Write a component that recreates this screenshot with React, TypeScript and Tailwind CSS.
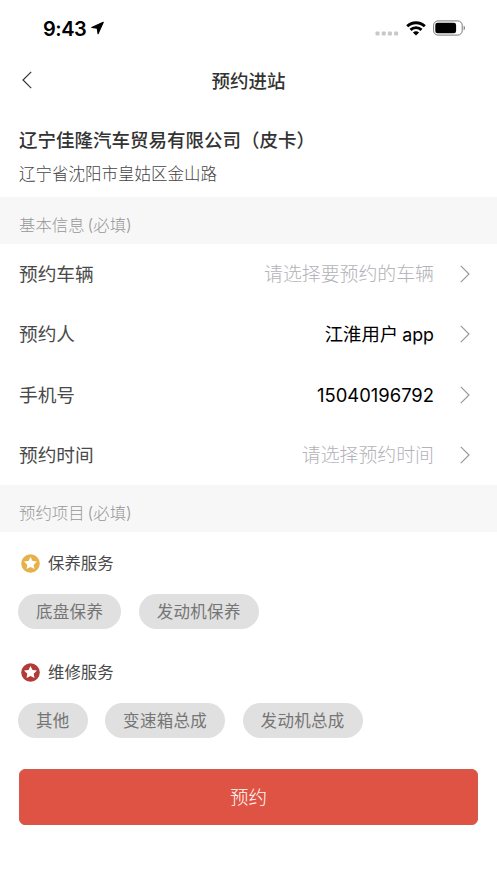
import { clsx } from "clsx";

const fields = [
  { label: "预约车辆", placeholder: "请选择要预约的车辆" },
  { label: "预约人", value: "江淮用户", suffix: "app" },
  { label: "手机号", value: "15040196792" },
  { label: "预约时间", placeholder: "请选择预约时间" },
];

const services = [
  { name: "保养服务", color: "text-[#e6b04a]", items: ["底盘保养", "发动机保养"] },
  { name: "维修服务", color: "text-[#b23a38]", items: ["其他", "变速箱总成", "发动机总成"] },
];

const StatusBar = () => (
  <div className="flex h-14 items-center justify-between pl-[43px] pr-[31px]">
    <div className="flex items-center gap-[5px]">
      <span className="pt-px text-[20px] leading-6 font-semibold tracking-[-0.5px] text-black">9:43</span>
      <svg width="13" height="14" viewBox="0 0 14 14">
        <path d="M13.2 0.8 L7.6 13.2 L6.7 7.3 L0.8 6.4 Z" fill="#000" stroke="#000" strokeWidth="1.2" strokeLinejoin="round" />
      </svg>
    </div>
    <div className="flex items-center">
      <svg className="mt-[10px] mr-[7px]" width="24" height="5" viewBox="0 0 24 5" fill="#c8c8c8">
        <rect x="0.5" y="0.5" width="4" height="4" rx="1" />
        <rect x="6.7" y="0.5" width="4" height="4" rx="1" />
        <rect x="12.9" y="0.5" width="4" height="4" rx="1" />
        <rect x="19.1" y="0.5" width="4" height="4" rx="1" />
      </svg>
      <svg className="mr-[7px]" width="20" height="15" viewBox="0 0 20 15" fill="none" stroke="#000" strokeWidth="2.9">
        <path d="M1.2 5.3 A12.6 12.6 0 0 1 18.8 5.3" />
        <path d="M4.5 8.9 A7.9 7.9 0 0 1 15.5 8.9" />
        <path d="M10 14.6 L6.9 11.6 A4.4 4.4 0 0 1 13.1 11.6 Z" fill="#000" stroke="none" />
      </svg>
      <svg width="33" height="16" viewBox="0 0 33 16">
        <rect x="0.6" y="0.9" width="28.6" height="14.2" rx="4.4" fill="none" stroke="#777" strokeWidth="1" />
        <rect x="2.3" y="2.7" width="20.8" height="10.6" rx="2.4" fill="#000" />
        <path d="M30.6 5.6 C32.5 6.4 32.5 9.6 30.6 10.4 Z" fill="#888" />
      </svg>
    </div>
  </div>
);

const SectionTitle = ({ title }: { title: string }) => (
  <div className="flex h-[46.5px] items-center bg-[#f7f7f7] pt-[10.5px] pl-[19px] text-[16.4px] font-light text-[#979797]">
    {title}
    <span className="ml-[3px]">(必填)</span>
  </div>
);

const Arrow = () => (
  <svg width="10" height="18" viewBox="0 0 10 18" fill="none" stroke="#999" strokeWidth="1.2">
    <path d="M0.8 0.8 L9 9 L0.8 17.2" />
  </svg>
);

const App = () => {
  return (
    <div className="min-h-[883px] w-full bg-white font-['Inter','Noto_Sans_CJK_SC',sans-serif] text-[#333]">
      <StatusBar />

      <header className="grid h-[49px] grid-cols-[1fr_auto_1fr] items-center px-[22px]">
        <svg className="mb-px" width="10" height="18" viewBox="0 0 10 18" fill="none" stroke="#333" strokeWidth="1.2">
          <path d="M9.2 0.8 L1 9 L9.2 17.2" />
        </svg>
        <h1 className="pt-px text-[18.5px] leading-6 font-medium">预约进站</h1>
      </header>

      <div className="h-[92px] pt-[22px] pl-[19px]">
        <h2 className="text-[18.5px] leading-[26px] font-medium">辽宁佳隆汽车贸易有限公司（皮卡）</h2>
        <p className="mt-[9px] text-[16.5px] leading-6 font-light text-[#444]">辽宁省沈阳市皇姑区金山路</p>
      </div>

      <SectionTitle title="基本信息" />
      <div className="h-[241.5px] pt-[0.5px]">
        {fields.map((field) => (
          <div key={field.label} className="flex h-[60.3px] items-center justify-between pl-[19px] pr-[27px]">
            <span className="pt-[2px] text-[18.7px] leading-7 text-[#4a4a4a]">{field.label}</span>
            <div className="flex items-center gap-[26px]">
              <span
                className={clsx(
                  "leading-7",
                  field.value ? "text-[18.4px] text-black" : "pt-[2px] text-[18.9px] font-light text-[#b2b2b8]"
                )}
              >
                {field.value || field.placeholder}
                {field.suffix && <span className="ml-1 text-[17.8px]">{field.suffix}</span>}
              </span>
              <Arrow />
            </div>
          </div>
        ))}
      </div>

      <SectionTitle title="预约项目" />
      {services.map((service) => (
        <div key={service.name} className="h-[109px] pt-[19.5px] pl-[18px]">
          <div className="flex h-6 items-center gap-2 pl-[3px]">
            <svg className={service.color} width="19" height="19" viewBox="0 0 19 19">
              <circle cx="9.5" cy="9.5" r="9.3" fill="currentColor" />
              <path
                d="M9.5 2.9 L11.5 7 L16 7.6 L12.7 10.7 L13.5 15.1 L9.5 13 L5.5 15.1 L6.3 10.7 L3 7.6 L7.5 7 Z"
                fill="#fff"
              />
            </svg>
            <span className="text-[16.4px] text-[#4a4a4a]">{service.name}</span>
          </div>
          <div className="mt-[19px] flex gap-[17.5px]">
            {service.items.map((item) => (
              <button
                key={item}
                className="h-[35px] rounded-full bg-[#e0e0e0] px-[18px] pt-px text-[16.5px] leading-[34px] tracking-[0.3px] text-[#757575]"
              >
                {item}
              </button>
            ))}
          </div>
        </div>
      ))}

      <div className="px-[19px] pt-[19.5px]">
        <button className="h-[56px] w-full rounded-[6px] border border-[#cf5b4d] bg-[#df5344] pt-px text-[18.5px] font-light text-white">
          预约
        </button>
      </div>
    </div>
  );
};

export default App;
